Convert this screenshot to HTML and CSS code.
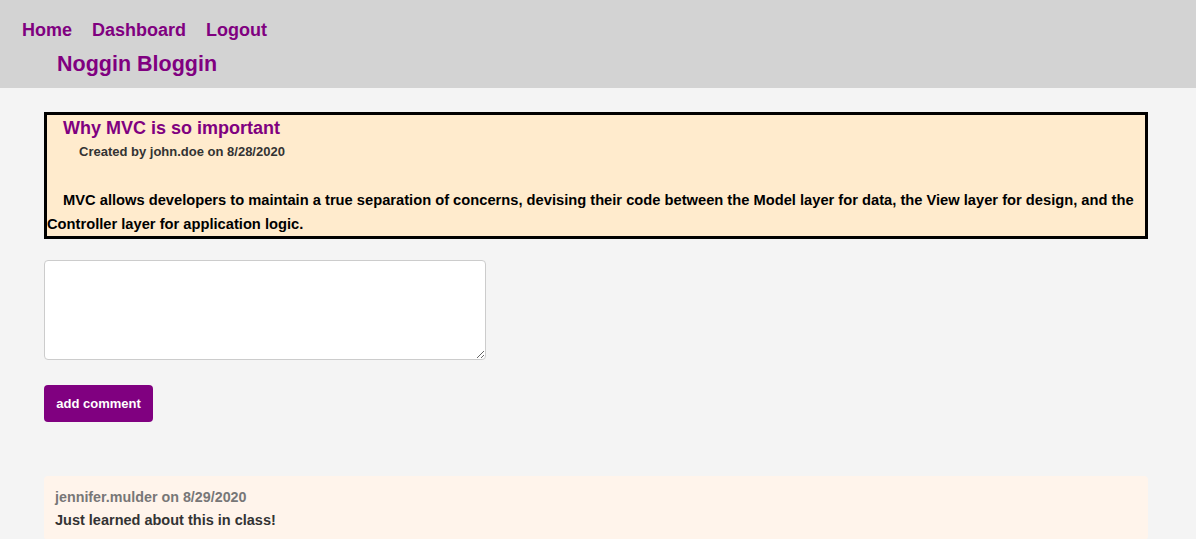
FILE: index.html
```html
<!DOCTYPE html>
<html lang="en">
<head>
<meta charset="utf-8">
<title>Noggin Bloggin</title>
<link rel="stylesheet" href="styles.css">
</head>
<body>
<header class="site-header">
  <nav class="nav">
    <a href="#" class="nav-link">Home</a>
    <a href="#" class="nav-link">Dashboard</a>
    <a href="#" class="nav-link">Logout</a>
  </nav>
  <h1 class="site-title">Noggin Bloggin</h1>
</header>
<main class="main">
  <article class="post">
    <h2 class="post-title">Why MVC is so important</h2>
    <p class="post-meta">Created by john.doe on 8/28/2020</p>
    <p class="post-body">MVC allows developers to maintain a true separation of concerns, devising their code between the Model layer for data, the View layer for design, and the Controller layer for application logic.</p>
  </article>
  <form class="comment-form">
    <textarea class="comment-input"></textarea>
    <button type="button" class="btn">add comment</button>
  </form>
  <section class="comments">
    <div class="comment">
      <p class="comment-meta">jennifer.mulder on 8/29/2020</p>
      <p class="comment-text">Just learned about this in class!</p>
    </div>
  </section>
</main>
</body>
</html>
```
FILE: styles.css
```css
* { box-sizing: border-box; }
html, body { margin: 0; padding: 0; }
body {
  background: #f4f4f4;
  font-family: "Liberation Sans", Arial, sans-serif;
  font-weight: bold;
  color: #000;
}
.site-header {
  background: #d3d3d3;
  height: 88px;
  padding: 19px 0 0 22px;
}
.nav {
  display: flex;
  gap: 20px;
}
.nav-link {
  color: #800080;
  text-decoration: none;
  font-size: 18px;
  line-height: 22px;
}
.site-title {
  margin: 10px 0 0 35px;
  color: #800080;
  font-size: 21.5px;
  line-height: 26px;
}
.main {
  padding: 24px 48px 0 44px;
}
.post {
  background: #ffebcd;
  border: 3px solid #000;
  padding: 1px 0 0;
}
.post-title {
  margin: 0;
  padding-left: 16px;
  color: #800080;
  font-size: 18px;
  line-height: 24px;
}
.post-meta {
  margin: 0;
  padding-left: 32px;
  color: #333;
  font-size: 13px;
  line-height: 24px;
}
.post-body {
  margin: 24px 0 0;
  text-indent: 16px;
  font-size: 14.7px;
  line-height: 24px;
}
.comment-form {
  display: flex;
  flex-direction: column;
  align-items: flex-start;
  margin-top: 21px;
}
.comment-input {
  width: 442px;
  height: 100px;
  background: #fff;
  border: 1px solid #ccc;
  border-radius: 4px;
  resize: vertical;
  font-family: inherit;
}
.btn {
  margin-top: 25px;
  width: 109px;
  height: 37px;
  background: #800080;
  color: #fff;
  border: none;
  border-radius: 4px;
  font-family: "Liberation Sans", Arial, sans-serif;
  font-weight: bold;
  font-size: 13px;
}
.comments {
  margin-top: 54px;
}
.comment {
  background: #fff4eb;
  border-radius: 4px;
  padding: 13px 11px 10px;
}
.comment-meta {
  margin: 0;
  color: #777;
  font-size: 14.3px;
  line-height: 16px;
}
.comment-text {
  margin: 5px 0 0;
  color: #333;
  font-size: 14.5px;
  line-height: 20px;
}
```
